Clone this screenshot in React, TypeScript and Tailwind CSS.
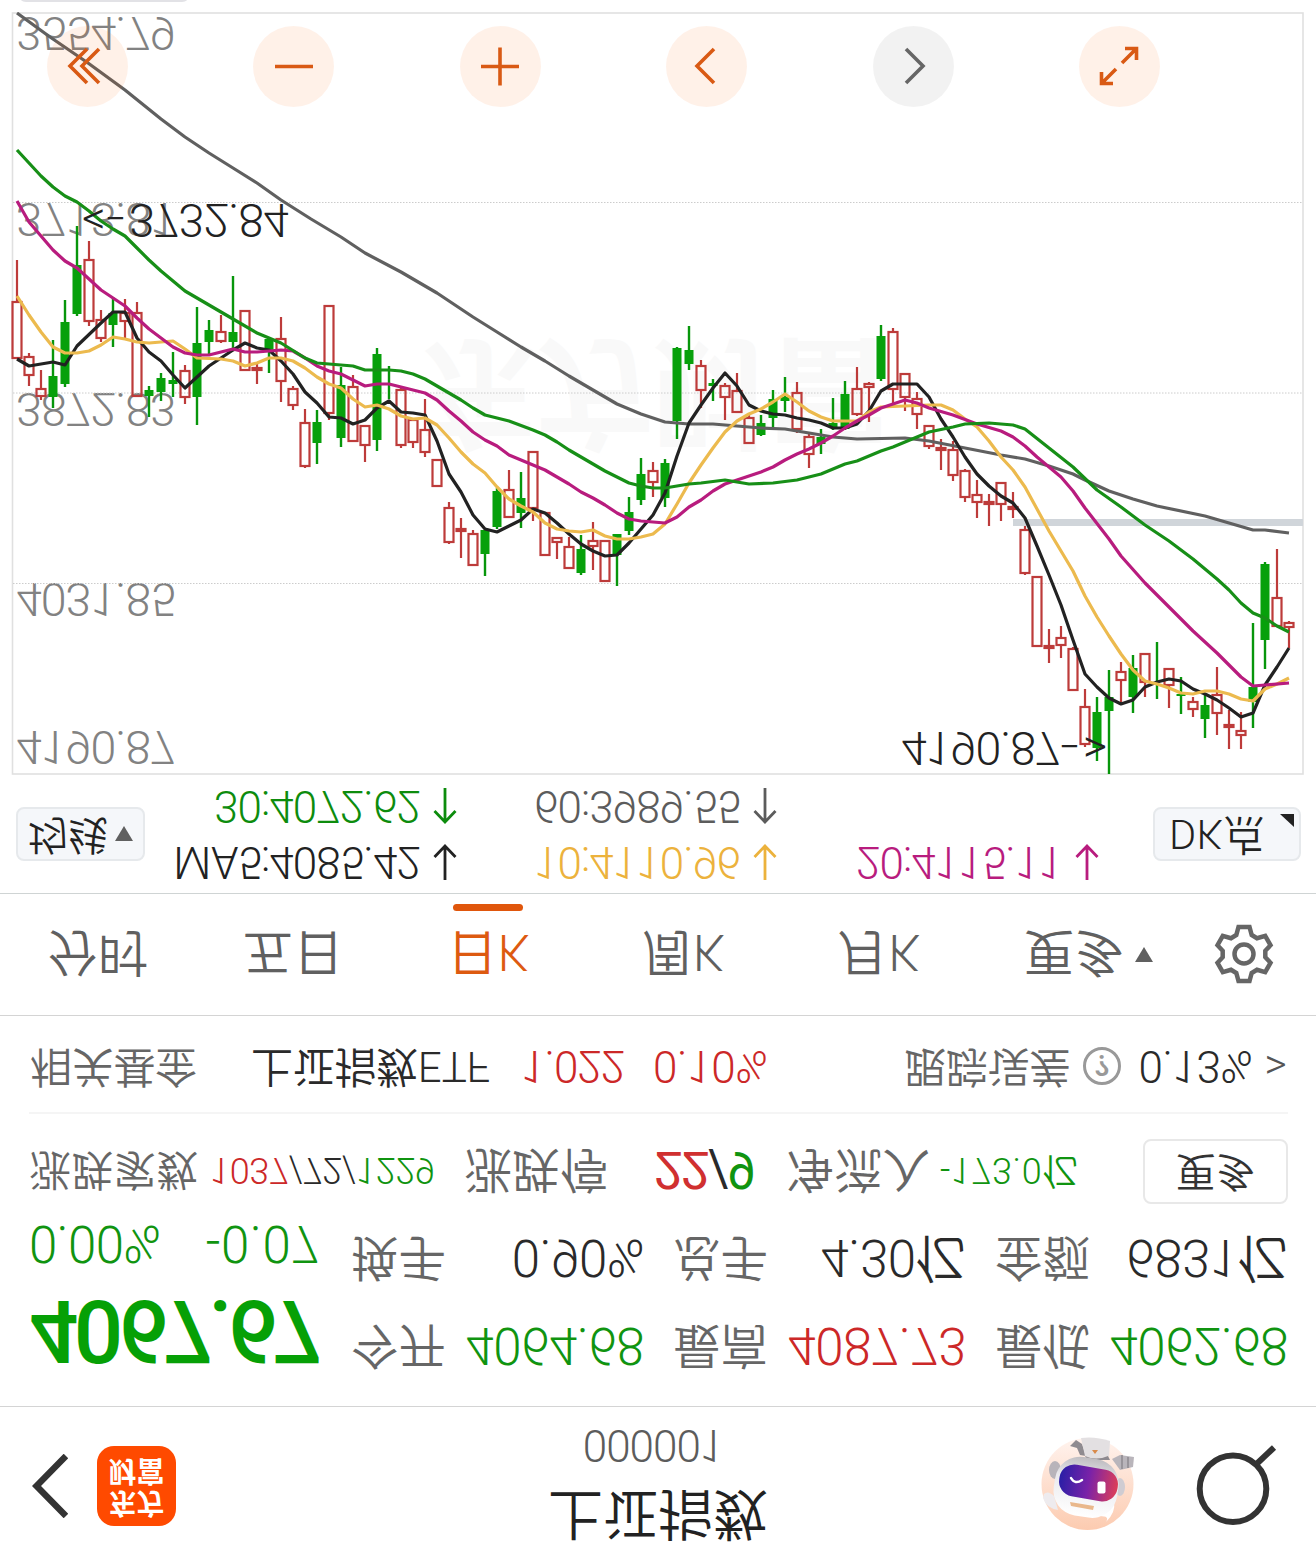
import React from 'react';

type Candle = [kind: 'r' | 'g', high: number, top: number, bottom: number, low: number];

// one entry per trading day, 12px apart, values are pixel rows of the chart
const candles: Candle[] = [
  ['r', 260, 302, 358, 358], ['r', 353, 357, 375, 386], ['r', 370, 389, 396, 400], ['g', 340, 376, 397, 408],
  ['g', 300, 322, 384, 387], ['g', 226, 265, 314, 316], ['r', 241, 260, 321, 326], ['r', 310, 320, 338, 342],
  ['g', 297, 313, 325, 347], ['r', 299, 313, 321, 338], ['r', 302, 313, 396, 397], ['g', 386, 390, 396, 417],
  ['g', 373, 378, 392, 401], ['g', 352, 380, 384, 397], ['r', 365, 371, 397, 404], ['g', 307, 343, 397, 425],
  ['g', 320, 330, 342, 356], ['r', 315, 332, 341, 343], ['g', 276, 332, 342, 348], ['r', 311, 311, 370, 370],
  ['r', 363, 368, 370, 384], ['g', 339, 339, 351, 373], ['r', 317, 339, 381, 402], ['r', 386, 389, 405, 410],
  ['r', 409, 423, 466, 468], ['g', 410, 422, 443, 464], ['r', 306, 306, 413, 420], ['g', 367, 385, 438, 447],
  ['r', 375, 387, 441, 441], ['r', 426, 426, 445, 462], ['g', 348, 354, 440, 451], ['g', 366, 370, 370, 399],
  ['r', 387, 390, 445, 448], ['r', 420, 420, 442, 448], ['r', 399, 430, 452, 457], ['r', 460, 460, 486, 486],
  ['r', 502, 508, 542, 544], ['r', 518, 529, 531, 558], ['r', 530, 534, 565, 565], ['g', 530, 530, 554, 576],
  ['g', 488, 491, 527, 529], ['r', 470, 490, 517, 517], ['g', 472, 498, 513, 528], ['r', 452, 452, 508, 521],
  ['r', 513, 513, 555, 555], ['r', 538, 538, 542, 559], ['r', 537, 547, 568, 568], ['g', 535, 549, 573, 575],
  ['r', 522, 541, 546, 570], ['r', 541, 541, 581, 581], ['g', 534, 534, 555, 586], ['g', 497, 512, 531, 535],
  ['g', 458, 474, 500, 505], ['r', 462, 471, 482, 497], ['g', 459, 463, 498, 507], ['g', 347, 348, 421, 439],
  ['g', 326, 350, 364, 370], ['r', 360, 366, 390, 408], ['g', 379, 383, 386, 401], ['r', 383, 386, 397, 420],
  ['r', 373, 391, 412, 412], ['r', 415, 418, 443, 443], ['g', 415, 423, 435, 436], ['g', 390, 399, 418, 427],
  ['g', 377, 397, 401, 412], ['r', 382, 393, 429, 433], ['r', 432, 437, 454, 468], ['g', 429, 437, 444, 454],
  ['g', 398, 423, 427, 430], ['g', 381, 394, 429, 430], ['r', 367, 389, 414, 416], ['r', 382, 384, 387, 422],
  ['g', 325, 336, 379, 381], ['r', 328, 332, 389, 403], ['r', 374, 374, 397, 411], ['r', 392, 399, 414, 429],
  ['r', 426, 426, 446, 449], ['r', 439, 448, 450, 470], ['r', 441, 450, 475, 481], ['r', 469, 471, 497, 502],
  ['r', 480, 495, 502, 518], ['r', 494, 502, 504, 526], ['r', 483, 483, 504, 521], ['r', 492, 507, 509, 518],
  ['r', 526, 530, 573, 575], ['r', 576, 577, 646, 646], ['r', 629, 646, 648, 663], ['r', 626, 638, 645, 658],
  ['r', 647, 649, 690, 690], ['r', 689, 707, 744, 747], ['g', 697, 712, 748, 761], ['g', 670, 697, 711, 774],
  ['r', 662, 672, 680, 702], ['g', 655, 668, 697, 713], ['r', 654, 654, 682, 697], ['g', 642, 682, 682, 699],
  ['r', 669, 669, 685, 708], ['g', 677, 694, 696, 714], ['r', 697, 702, 709, 717], ['g', 695, 705, 719, 738],
  ['r', 667, 695, 713, 735], ['r', 710, 725, 727, 749], ['r', 712, 731, 735, 749], ['g', 623, 687, 702, 728],
  ['g', 562, 564, 640, 669], ['r', 549, 598, 626, 626], ['r', 621, 623, 627, 648],
];

const averages = [
  {
    color: '#606060',
    points:
      '17,13 50,37 88,63 125,90 161,119 185,137 209,153 233,168 257,183 281,200 311,219 341,237 365,253 401,272 437,293 473,317 497,332 521,347 545,361 569,376 593,390 617,404 641,414 665,422 689,424 713,424 737,426 761,428 785,429 809,433 833,437 857,439 905,438 929,441 965,448 1001,455 1025,459 1049,466 1073,474 1085,480 1109,491 1133,499 1157,506 1205,516 1229,523 1253,530 1265,530 1289,533',
  },
  {
    color: '#222222',
    points:
      '17,359 29,366 53,362 65,365 77,346 101,323 113,312 125,312 137,338 149,352 161,361 173,375 185,388 197,377 209,366 221,358 233,350 245,343 257,348 269,350 281,361 293,374 305,392 317,403 329,417 341,418 353,424 365,420 377,408 389,401 401,412 413,413 425,415 437,441 449,474 461,492 473,515 485,529 497,532 509,526 521,520 533,509 545,513 557,523 569,534 581,544 593,551 605,556 617,555 629,543 641,529 653,515 665,493 677,456 689,423 701,405 713,388 725,373 737,386 749,405 761,411 773,414 785,415 797,418 809,420 821,423 833,428 845,428 857,424 869,411 881,391 893,384 917,384 929,397 941,419 953,437 965,457 977,474 989,486 1001,496 1013,503 1025,518 1037,546 1049,575 1061,605 1073,640 1085,674 1097,687 1109,698 1121,704 1133,700 1145,687 1157,682 1169,679 1181,681 1193,689 1205,694 1217,700 1229,708 1241,717 1253,713 1265,685 1277,667 1289,648',
  },
  {
    color: '#ecba4e',
    points:
      '17,296 29,315 41,332 53,347 65,353 77,353 89,351 101,345 113,337 125,339 137,342 149,343 161,342 173,341 185,349 197,358 221,359 233,361 245,366 257,363 269,358 281,358 293,361 305,368 317,377 329,384 341,388 353,399 365,407 377,405 389,409 401,416 413,419 425,418 437,425 449,438 461,452 473,464 485,473 497,487 509,499 521,506 533,512 545,523 557,529 569,531 581,532 593,530 605,536 617,539 629,539 641,537 653,534 665,524 677,504 689,483 701,465 713,448 725,432 737,421 749,414 761,409 773,402 785,394 797,402 809,411 821,417 833,421 857,421 869,412 881,407 905,406 929,405 941,405 953,410 965,419 977,427 989,441 1001,457 1013,470 1025,487 1037,509 1049,531 1061,551 1073,571 1085,596 1097,617 1109,636 1121,654 1133,670 1145,681 1157,684 1169,688 1181,693 1193,694 1205,691 1217,691 1229,694 1241,699 1253,701 1265,689 1277,684 1289,678',
  },
  {
    color: '#b81c7e',
    points:
      '17,201 29,222 41,236 53,250 65,261 77,268 89,279 101,290 113,298 125,306 137,318 149,329 161,338 173,347 185,353 197,355 209,355 221,352 233,349 245,352 257,352 281,350 293,351 305,358 317,366 329,371 341,374 353,380 365,386 377,384 389,384 401,387 413,390 425,393 437,400 449,411 461,421 473,432 485,440 497,446 509,455 521,460 533,465 545,470 557,477 569,484 581,492 593,498 605,505 617,513 629,519 641,521 653,522 665,523 677,517 689,507 701,500 713,491 725,484 737,480 761,472 773,467 785,460 797,454 809,449 821,443 833,436 845,428 857,421 869,415 881,408 893,404 905,400 917,403 929,408 953,415 977,424 1001,431 1013,437 1025,446 1037,457 1049,467 1061,477 1073,491 1085,508 1109,539 1121,556 1145,583 1169,607 1193,631 1217,653 1241,677 1253,686 1265,685 1289,683',
  },
  {
    color: '#178f17',
    points:
      '17,150 29,163 41,176 53,187 65,196 77,202 89,211 101,221 113,229 125,236 137,248 149,260 161,271 173,281 185,291 209,305 233,319 257,333 281,343 305,358 317,363 329,364 353,366 365,370 389,370 401,371 413,374 425,379 449,393 461,400 473,408 485,415 509,421 533,430 545,435 557,442 569,450 593,464 605,471 629,483 641,486 653,488 665,488 689,484 701,483 725,480 749,484 773,483 797,480 821,474 845,464 857,461 881,451 893,447 905,442 929,432 953,427 965,424 989,423 1013,425 1025,429 1049,448 1073,467 1097,490 1121,507 1145,525 1169,541 1193,559 1217,579 1229,590 1241,603 1253,613 1265,618 1277,626 1289,632',
  },
];

const RobotAvatar: React.FC = () => (
  <svg viewBox="0 0 96 96" className="mt-[4px] w-24 h-24 -scale-y-100">
    <defs>
      <linearGradient id="halo" x1="0" y1="0" x2="0" y2="1">
        <stop offset="0" stopColor="#fff3ee" />
        <stop offset="1" stopColor="#fccbb0" />
      </linearGradient>
      <linearGradient id="visor" x1="0" y1="0" x2="1" y2="0">
        <stop offset="0" stopColor="#2a1fa6" />
        <stop offset="0.5" stopColor="#7a22a8" />
        <stop offset="1" stopColor="#dd3f58" />
      </linearGradient>
      <linearGradient id="shell" x1="0" y1="0" x2="0" y2="1">
        <stop offset="0" stopColor="#bfbdc1" />
        <stop offset="0.35" stopColor="#e9e9ed" />
        <stop offset="1" stopColor="#ffffff" />
      </linearGradient>
    </defs>
    <circle cx="47.5" cy="48" r="46" fill="url(#halo)" />
    <path d="M30 10 L36 4 L42 8 L46 20 L40 19 L37 12 Z" fill="#8f8b90" />
    <path d="M41 2 Q55 0 70 5 L69 20 Q55 25 45 20 Z" fill="#e3e0e2" />
    <path d="M45 20 Q56 25 68 20 L70 24 H47 Z" fill="#8d8a90" />
    <path d="M52 14 h6 l-3 4 z" fill="#d98a4a" />
    <path d="M72 23 L80 19 L94 21 L93 31 L80 34 Z" fill="#b9b5bb" />
    <path d="M82 19 v14 M88 21 v11" stroke="#8d8990" strokeWidth="1.5" />
    <ellipse cx="15" cy="34" rx="6" ry="9" fill="#b8b4ba" />
    <ellipse cx="80" cy="51" rx="5" ry="9" fill="#cfccd2" />
    <path d="M4 58 Q8 54 14 60 L18 74 Q6 72 3 62 Z" fill="#eeebee" />
    <path d="M74 66 Q76 76 66 86 Q70 80 60 80 Z" fill="#fff" />
    <rect x="14" y="22" width="64" height="59" rx="25" fill="url(#shell)" transform="rotate(9 47 52)" />
    <rect x="19" y="31" width="59" height="32" rx="15" fill="url(#visor)" transform="rotate(10 49 47)" />
    <path d="M31 42 Q35 49 42 44" fill="none" stroke="#fff" strokeWidth="2.5" strokeLinecap="round" />
    <rect x="57.5" y="45.5" width="8" height="12" rx="2" fill="#fff" />
    <path d="M30 66 L54 70 L53 74 L31 70 Z" fill="#e9b88c" />
  </svg>
);

const Header: React.FC = () => (
  <header className="h-[160px] grid grid-cols-[1fr_auto_1fr] items-center border-b border-[#d4d4d4]">
    <div className="flex items-center pl-[32px] gap-[29px]">
      <svg viewBox="0 0 36 64" className="w-9 h-16" fill="none" stroke="#333" strokeWidth="6.5">
        <path d="M34 2 L4.5 32 L34 62" />
      </svg>
      <div className="w-[79px] h-[80px] rounded-[17px] bg-[#ff4a00] text-white font-bold text-[28px] leading-[32px] flex flex-col items-center justify-center">
        <span>东方</span>
        <span>财富</span>
      </div>
    </div>
    <div className="flex flex-col items-center pt-[12px]">
      <h1 className="text-[55px] leading-[70px] text-[#222]">上证指数</h1>
      <span className="mr-[10px] text-[44px] leading-[68px] tracking-[-1px] text-[#5c5c5c]">000001</span>
    </div>
    <div className="flex items-center justify-end gap-[60px] pr-[38px]">
      <RobotAvatar />
      <svg viewBox="0 0 82 82" className="w-[82px] h-[82px] -scale-y-100" fill="none" stroke="#333" strokeWidth="6">
        <circle cx="37" cy="43.7" r="33.3" />
        <path d="M60 19.5 L78 2.5" />
      </svg>
    </div>
  </header>
);

const stats = [
  { label: '今开', value: '4064.68', color: 'text-[#109410]' },
  { label: '最高', value: '4087.73', color: 'text-[#cc2828]' },
  { label: '最低', value: '4062.68', color: 'text-[#109410]' },
  { label: '换手', value: '0.90%', color: 'text-[#2a2a2a]' },
  { label: '总手', value: '4.30亿', color: 'text-[#2a2a2a]' },
  { label: '金额', value: '6831亿', color: 'text-[#2a2a2a]' },
];

const Quote: React.FC = () => (
  <section className="h-[391px] pl-[29px] pr-[28px] border-b border-[#d4d4d4]">
    <div className="h-[202px] flex">
      <div className="w-[323px] pt-[29px] text-[#109410]">
        <div className="text-[87px] leading-[92px] font-medium tracking-[-4.6px] text-[#06a006]">4067.67</div>
        <div className="w-[291px] flex justify-between text-[51px] leading-[84px]">
          <span className="tracking-[-0.7px]">0.00%</span>
          <span className="tracking-[0.5px]">-0.07</span>
        </div>
      </div>
      <div className="flex-1 pt-[17px] grid grid-cols-3 auto-rows-[88px] gap-x-[30px]">
        {stats.map(s => (
          <div key={s.label} className="flex items-center justify-between leading-[88px] whitespace-nowrap">
            <span className="-ml-px text-[47.5px] text-[#666]">{s.label}</span>
            <span className={`text-[51px] tracking-[-0.5px] ${s.color}`}>{s.value}</span>
          </div>
        ))}
      </div>
    </div>

    <div className="h-[64px] flex items-start whitespace-nowrap leading-[69px] text-[#666]">
      <span className="w-[181px] text-[42px] tracking-[0.4px]">涨跌家数</span>
      <span className="w-[254px] text-[36px] tracking-[-0.3px] text-[#2a2a2a]">
        <span className="text-[#cc2828]">1037</span>/72/<span className="text-[#109410]">1229</span>
      </span>
      <span className="w-[190px] text-[48px]">涨跌停</span>
      <span className="w-[132px] text-[51px] tracking-[-1.6px] font-normal text-[#2a2a2a]">
        <span className="text-[#d03030]">22</span>/<span className="text-[#109410]">9</span>
      </span>
      <span className="w-[154px] text-[48px]">净流入</span>
      <span className="text-[36px] tracking-[0.6px] text-[#109410]">-173.0亿</span>
      <button className="ml-auto w-[145px] h-[65px] rounded-lg border-2 border-[#e8e8e8] text-[40px] leading-[62px] text-[#333]">更多</button>
    </div>

    <div className="mt-[26px] h-[2px] bg-[#f5f5f5]" />

    <div className="h-[92px] pl-px flex items-center whitespace-nowrap text-[44px] leading-[92px] tracking-[-0.7px] text-[#2a2a2a]">
      <span className="w-[221px] text-[42px] tracking-[-0.3px] text-[#666]">相关基金</span>
      <span className="w-[270px] text-[42px] tracking-[-0.3px]">上证指数ETF</span>
      <span className="w-[132px] tracking-[-1px] text-[#cc2828]">1.022</span>
      <span className="tracking-[-0.4px] text-[#cc2828]">0.10%</span>
      <span className="ml-auto text-[42px] tracking-[-0.4px] text-[#666]">跟踪误差</span>
      <span className="ml-[12px] w-[38px] h-[38px] rounded-full border-[3px] border-[#999] text-[30px] leading-[33px] font-medium text-center text-[#999]">?</span>
      <span className="ml-[18px] tracking-[-0.5px]">0.13%</span>
      <span className="ml-[12px] mr-[2px] text-[43px] text-[#555]">&gt;</span>
    </div>
  </section>
);

const tabs = ['分时', '五日', '日K', '周K', '月K'];

const Tabs: React.FC = () => (
  <nav className="h-[122px] flex border-b border-[#cfd4d4] text-[50.5px] leading-[126px] text-[#606060]">
    {tabs.map(tab => (
      <div key={tab} className="w-[195.3px] flex flex-col items-center">
        {tab === '日K' ? (
          <>
            <span className="h-[104px] text-[#dd5a10]">{tab}</span>
            <span className="w-[70px] h-[7px] rounded-full bg-[#e0560c]" />
          </>
        ) : (
          <span>{tab}</span>
        )}
      </div>
    ))}
    <div className="ml-[47px] h-[121px] flex items-center gap-[11px]">
      <span className="pt-[4px]">更多</span>
      <svg viewBox="0 0 18 15" className="w-[18px] h-[15px]" fill="#606060">
        <path d="M0 0 H18 L9 15 Z" />
      </svg>
    </div>
    <div className="ml-auto mr-[42px] flex items-center">
      <svg viewBox="0 0 60 60" className="w-[60px] h-[60px]" fill="none" stroke="#666" strokeWidth="4.5">
        <path d="M24.5 3 h11 l2.2 8 l5.3 3.2 l8.2 -2.4 l5.3 9.4 l-5.2 5.6 v6.4 l5.2 5.6 l-5.3 9.4 l-8.2 -2.4 l-5.3 3.2 l-2.2 8 h-11 l-2.2 -8 l-5.3 -3.2 l-8.2 2.4 l-5.3 -9.4 l5.2 -5.6 v-6.4 l-5.2 -5.6 l5.3 -9.4 l8.2 2.4 l5.3 -3.2 z" />
        <circle cx="30" cy="30" r="9.5" />
      </svg>
    </div>
  </nav>
);

const Average: React.FC<{ text: string; color: string; up?: boolean }> = ({ text, color, up }) => (
  <div className={`flex items-center justify-end gap-[13px] ${color}`}>
    <span className="tracking-[-0.9px]">{text}</span>
    <svg viewBox="0 0 24 36" className={up ? 'w-6 h-9' : 'w-6 h-9 -scale-y-100'} fill="none" stroke="currentColor" strokeWidth="2.8">
      <path d="M12 36 V2 M1.5 13 L12 2 L22.5 13" />
    </svg>
  </div>
);

const Legend: React.FC = () => (
  <section className="h-[118px] flex items-center pl-[16px] pr-[15px] text-[40px] text-[#222]">
    <button className="w-[129px] h-[54px] rounded-lg border-2 border-[#e6e9ec] bg-[#f5f7fa] leading-[50px] flex items-center justify-center gap-[7px]">
      <span>均线</span>
      <svg viewBox="0 0 18 15" className="w-[18px] h-[15px]" fill="#606060">
        <path d="M0 0 H18 L9 15 Z" />
      </svg>
    </button>
    <div className="grid grid-cols-[312px_320px_322px] auto-rows-[56px] text-[44px] leading-[56px] whitespace-nowrap">
      <Average text="MA5:4085.42" color="text-[#222]" />
      <Average text="10:4110.96" color="text-[#ecb23c]" />
      <Average text="20:4115.11" color="text-[#b81c7e]" />
      <Average text="30:4072.62" color="text-[#0d8c0d]" up />
      <Average text="60:3989.55" color="text-[#5c5c5c]" up />
    </div>
    <button className="relative ml-auto w-[148px] h-[54px] pl-[14px] rounded-lg border-2 border-[#e6e9ec] bg-[#f5f7fa] text-[41.5px] leading-[50px] tracking-[0.4px] text-left">
      DK点
      <svg viewBox="0 0 14 13" className="absolute right-[5px] bottom-[5px] w-[14px] h-[13px]" fill="#222">
        <path d="M0 13 H14 V0 Z" />
      </svg>
    </button>
  </section>
);

const controls = [
  { name: 'first', path: 'M24 8 L7 25 L24 42 M36 8 L19 25 L36 42', active: true },
  { name: 'zoom-out', path: 'M6 25.5 H44', active: true },
  { name: 'zoom-in', path: 'M6 25.5 H44 M25 6.5 V44.5', active: true },
  { name: 'previous', path: 'M32 8 L15 25 L32 42', active: true },
  { name: 'next', path: 'M18 8 L35 25 L18 42', active: false },
  { name: 'fullscreen', path: 'M28 22 L42 8 M31 7.5 H42.5 V19 M22 28 L8 42 M7.5 31 V42.5 H19', active: true },
];

const Chart: React.FC = () => (
  <section className="relative h-[763px] text-[46.5px] leading-[40px] tracking-[-1px]">
    <div className="absolute left-[418px] top-[325px] text-[120px] leading-[120px] tracking-[-3px] font-bold text-[#f9f9f9]">东方财富</div>
    <div className="text-[#828282]">
      <span className="absolute left-[16px] top-[8px]">4190.87</span>
      <span className="absolute left-[16px] top-[156px]">4031.85</span>
      <span className="absolute left-[16px] top-[346px]">3872.83</span>
      <span className="absolute left-[16px] top-[536px]">3713.81</span>
      <span className="absolute left-[16px] top-[722px]">3554.79</span>
    </div>

    <svg viewBox="0 12 1316 763" className="absolute inset-0 w-full h-full -scale-y-100" fill="none">
      <rect x="12.5" y="13" width="1290.5" height="761" stroke="#e0e0e0" strokeWidth="1.6" />
      <path d="M13 202.5 H1303 M13 393 H1303 M13 583.5 H1303" stroke="#cccccc" strokeWidth="1" strokeDasharray="1.5 1.5" />
      <rect x="1013" y="519" width="290" height="7" fill="#d0d5da" />
      {candles.map(([kind, high, top, bottom, low], i) => {
        const x = 17 + i * 12;
        return kind === 'g' ? (
          <g key={i} stroke="#07960b" strokeWidth="2.4">
            <path d={`M${x} ${high} V${low}`} />
            {bottom > top && <rect x={x - 4.5} y={top} width="9" height={bottom - top} fill="#07a00b" stroke="none" />}
          </g>
        ) : (
          <g key={i} stroke="#bd3b3a" strokeWidth="2.2">
            <path d={`M${x} ${high} V${top} M${x} ${bottom} V${low}`} />
            <rect x={x - 4.5} y={top} width="9" height={bottom - top} />
          </g>
        );
      })}
      {averages.map(line => (
        <polyline key={line.color} points={line.points} stroke={line.color} strokeWidth="3.2" strokeLinejoin="round" />
      ))}
    </svg>

    <div className="absolute left-[82px] top-[535px] flex text-[#222]">
      <span className="w-[28px]">&lt;</span>
      <span className="w-[19px] scale-x-140">-</span>
      <span>3732.84</span>
    </div>
    <div className="absolute left-[901px] top-[7px] flex text-[#222]">
      <span className="w-[163px]">4190.87</span>
      <span className="w-[19px] scale-x-140">-</span>
      <span>&gt;</span>
    </div>

    <div className="absolute left-[47px] top-[668px] w-[1113px] flex justify-between">
      {controls.map(c => (
        <button
          key={c.name}
          className={`w-[81px] h-[81px] rounded-full flex items-center justify-center ${
            c.active ? 'bg-[#ff6600]/9 text-[#d95a14]' : 'bg-black/5 text-[#666]'
          }`}
        >
          <svg viewBox="0 0 50 50" className="w-[50px] h-[50px] -scale-y-100" fill="none" stroke="currentColor" strokeWidth="3.6">
            <path d={c.path} />
          </svg>
        </button>
      ))}
    </div>
  </section>
);

export default function App() {
  return (
    <main className="w-[1316px] h-[1566px] overflow-hidden bg-white -scale-y-100 font-[350] font-['Roboto','Noto_Sans_CJK_SC',sans-serif]">
      <Header />
      <Quote />
      <Tabs />
      <Legend />
      <Chart />
      <div className="ml-[18px] mt-[10px] w-[172px] h-[20px] rounded-lg bg-[#e2e2e6]" />
    </main>
  );
}
